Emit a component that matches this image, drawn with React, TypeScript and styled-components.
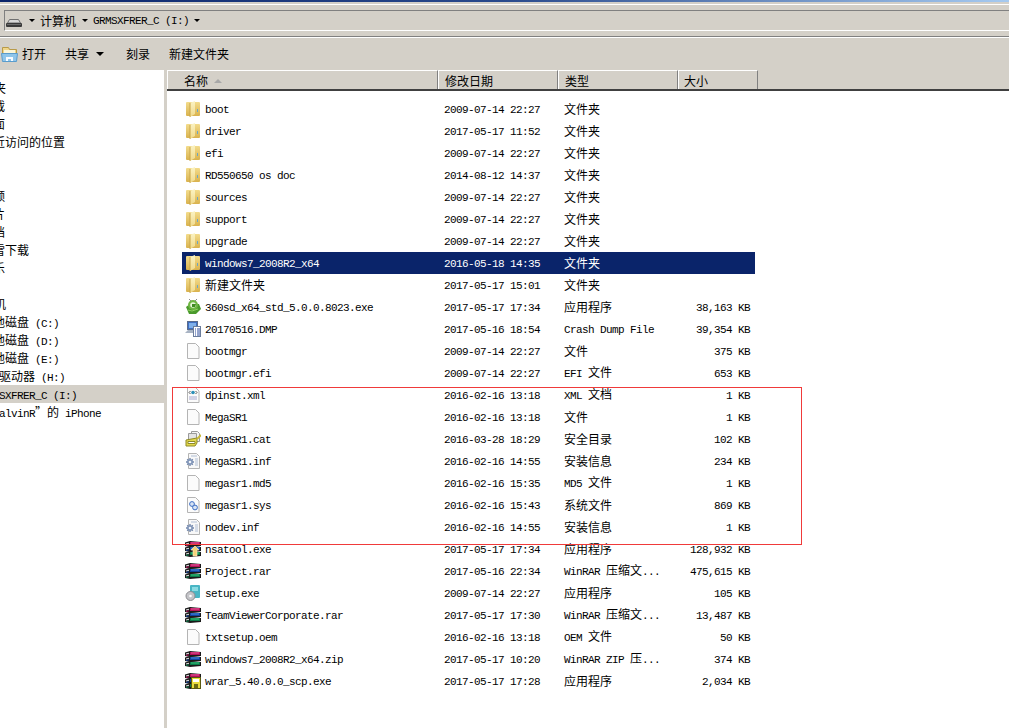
import styled, { createGlobalStyle } from "styled-components";

const GlobalStyle = createGlobalStyle`
  html, body {
    margin: 0;
    padding: 0;
    overflow: hidden;
    background: #ffffff;
    color: #000000;
    font-family: "Noto Sans CJK SC", "Liberation Sans", sans-serif;
    font-size: 12px;
  }
`;

const Page = styled.div`
  width: 1009px;
  height: 728px;
  display: flex;
  flex-direction: column;
  overflow: hidden;
  white-space: pre;
  line-height: 16px;
`;

const Latin = styled.span`
  font-family: "Liberation Mono", monospace;
  font-size: 11px;
  letter-spacing: -0.6px;
`;

// the source is SimSun: half-width latin next to full-width hanzi
function Label({ text }: { text: string }) {
  const runs = text.match(/[\x00-\x7f]+|[^\x00-\x7f]+/g) ?? [];
  return (
    <>
      {runs.map((run, i) =>
        /^[\x00-\x7f]/.test(run) ? <Latin key={i}>{run}</Latin> : <span key={i}>{run}</span>
      )}
    </>
  );
}

const TitleStrip = styled.div`
  height: 2px;
  background: linear-gradient(to right, #0a246a 0%, #2a4a8c 50%, #a6caf0 100%);
`;

const Chrome = styled.div`
  background: #d4d0c8;
  height: 35px;
  border-bottom: 1px solid #808080;
  box-sizing: border-box;
  padding: 2px 0 0 0;
`;

const ChromeInner = styled.div`
  border-top: 1px solid #ffffff;
  padding: 5px 0 0 4px;
`;

const AddressBox = styled.div`
  height: 21px;
  display: flex;
  align-items: center;
  border-top: 1px solid #808080;
  border-left: 1px solid #808080;
  border-bottom: 1px solid #ffffff;
  box-sizing: border-box;
  padding-left: 1px;
`;

const Crumb = styled.span<{ $gap: number }>`
  margin-left: ${({ $gap }) => $gap}px;
  display: inline-flex;
  align-items: center;
`;

const Caret = styled.span<{ $left: number; $size?: number }>`
  width: 0;
  height: 0;
  margin-left: ${({ $left }) => $left}px;
  border-left: ${({ $size }) => $size ?? 3}px solid transparent;
  border-right: ${({ $size }) => $size ?? 3}px solid transparent;
  border-top: ${({ $size }) => $size ?? 3}px solid #000000;
`;

const Toolbar = styled.div`
  height: 33px;
  background: #d4d0c8;
  border-top: 1px solid #ffffff;
  box-sizing: border-box;
  display: flex;
  align-items: center;
  padding-left: 1px;
`;

const ToolButton = styled.span<{ $left: number }>`
  margin-left: ${({ $left }) => $left}px;
  display: inline-flex;
  align-items: center;
`;

const Main = styled.div`
  flex: 1;
  display: flex;
  min-height: 0;
`;

const Nav = styled.div`
  width: 164px;
  padding-top: 9px;
  overflow: hidden;
  box-sizing: border-box;
  flex: none;
`;

const NavRow = styled.div<{ $depth: number; $active?: boolean }>`
  height: 18px;
  line-height: 18px;
  padding-left: ${({ $depth }) => ($depth === 1 ? 11 : 0)}px;
  background: ${({ $active }) => ($active ? "#d4d0c8" : "transparent")};
  overflow: hidden;
`;

// the tree is scrolled sideways, so its labels start left of the window edge
const NavText = styled.div`
  margin-left: -30px;
`;

const Splitter = styled.div`
  width: 3px;
  background: #d4d0c8;
  flex: none;
`;

const Content = styled.div`
  flex: 1;
  position: relative;
  min-width: 0;
`;

const Header = styled.div`
  height: 21px;
  display: grid;
  grid-template-columns: 271px 120px 120px 80px 1fr;
  background: #d4d0c8;
  border-bottom: 2px solid #404040;
  box-sizing: border-box;
`;

const HeaderCell = styled.div<{ $pad: number }>`
  display: flex;
  align-items: center;
  gap: 6px;
  padding: 1px 0 0 ${({ $pad }) => $pad}px;
  border-top: 1px solid #ffffff;
  border-left: 1px solid #ffffff;
  border-right: 1px solid #808080;
  box-sizing: border-box;
  min-width: 0;
`;

const SortMark = styled.span`
  width: 0;
  height: 0;
  border-left: 4px solid transparent;
  border-right: 4px solid transparent;
  border-bottom: 4px solid #a8a8a8;
`;

const List = styled.div`
  padding: 7px 0 0 15px;
`;

const Row = styled.div<{ $selected?: boolean }>`
  width: 573px;
  height: 22px;
  display: grid;
  grid-template-columns: 262px 120px 120px 71px;
  align-items: center;
  background: ${({ $selected }) => ($selected ? "#0a246a" : "transparent")};
  color: ${({ $selected }) => ($selected ? "#ffffff" : "#000000")};
`;

const NameCell = styled.div`
  display: flex;
  align-items: center;
  padding-left: 3px;
  gap: 4px;
`;

const SizeCell = styled.div`
  text-align: right;
  padding-right: 5px;
`;

const Callout = styled.div`
  position: absolute;
  left: 5px;
  top: 317px;
  width: 630px;
  height: 158px;
  border: 1px solid #f03a3a;
  box-sizing: border-box;
  pointer-events: none;
`;

type IconKind =
  | "folder"
  | "exe360"
  | "dmp"
  | "file"
  | "xml"
  | "cat"
  | "inf"
  | "sys"
  | "nsa"
  | "rar"
  | "setup"
  | "wrar";

const Sheet = () => (
  <path d="M2.5 .5h8l3.5 3.5v11.5h-11.5z" fill="#fbfbfb" stroke="#b4b4b4" />
);

const Book = ({ y, dark, light }: { y: number; dark: string; light: string }) => (
  <g transform={`translate(0 ${y})`}>
    <path d="M0 1.5l5-1.5 11 1v4l-11 1-5-1z" fill="#1a1a1a" />
    <path d="M5 1h10v3h-10z" fill={dark} />
    <path d="M6 1.5h8v1h-8z" fill={light} />
    <path d="M1 2.5l3-.7v1l-3 .7z" fill="#e8e8e8" />
    <path d="M1 4l3-.7v1l-3 .7z" fill={dark} />
  </g>
);

const Books = () => (
  <>
    <Book y={0} dark="#b01058" light="#e85a9c" />
    <Book y={5} dark="#10409c" light="#4a94e8" />
    <Book y={10} dark="#0a7a48" light="#38c880" />
  </>
);

const InfGear = () => (
  <>
    <path d="M3.5 .5h8l3 3v12h-11z" fill="#f8f8f8" stroke="#b4b4b4" />
    <path d="M6 3h6M10 6h3M10 8h3M10 10h3M10 12h3" stroke="#b0bed4" />
    <g stroke="#7488ac" strokeWidth="1.4">
      <path d="M5 5v8M1 9h8M2.2 6.2l5.6 5.6M7.8 6.2l-5.6 5.6" />
    </g>
    <circle cx="5" cy="9" r="2.8" fill="#7f94b8" />
    <circle cx="5" cy="9" r="1.3" fill="#f0f4fa" />
  </>
);

function FileIcon({ kind }: { kind: IconKind }) {
  return (
    <svg width="16" height="16" viewBox="0 0 16 16" style={{ flex: "none" }}>
      {kind === "folder" && (
        <>
          <defs>
            <linearGradient id="folderBody" x1="0" y1="0" x2="0" y2="1">
              <stop offset="0" stopColor="#f3dc8c" />
              <stop offset="1" stopColor="#d9b24e" />
            </linearGradient>
            <linearGradient id="folderPage" x1="0" y1="0" x2="0" y2="1">
              <stop offset="0" stopColor="#fbf3c4" />
              <stop offset="1" stopColor="#f0d98a" />
            </linearGradient>
          </defs>
          <rect x="1" y="1" width="14" height="14" rx="1" fill="url(#folderBody)" />
          <path d="M5 2l5-2v13l-5 3z" fill="url(#folderPage)" />
          <path d="M5 2v14" stroke="#c8a446" />
          <rect x="12" y="8" width="1" height="3" fill="#6aa7c8" />
        </>
      )}
      {kind === "exe360" && (
        <>
          <path d="M1 8l4-3 9 0 2 5-5 5-7 0z" fill="#4a9a2c" />
          <circle cx="8" cy="6" r="5" fill="#6fb644" />
          <circle cx="8" cy="6" r="2.8" fill="#e6f4d8" />
          <path d="M4 0l2 2M12 0l-2 2" stroke="#8a8a8a" />
          <path d="M7 5h4l-1 3h-3z" fill="#3f8a24" />
          <path d="M3 11l4 1 6-2" stroke="#8fd060" fill="none" />
        </>
      )}
      {kind === "dmp" && (
        <>
          <rect x="2.5" y=".5" width="10" height="8" fill="#3f6fc4" stroke="#5a6c8c" />
          <rect x="4" y="2" width="7" height="5" fill="#7fb0ea" />
          <path d="M0 12l3-3h6v3z" fill="#a9b4c4" />
          <rect x="8.5" y="5.5" width="7" height="10" fill="#ffffff" stroke="#6b7d9c" />
          <path d="M10 8h1M12 8h3M10 10h1M12 10h3M10 12h1M12 12h3M10 14h1M12 14h3" stroke="#2a4a9c" />
        </>
      )}
      {kind === "file" && <Sheet />}
      {kind === "xml" && (
        <>
          <Sheet />
          <path d="M5.5 4l-1.5 1.5 1.5 1.5M10.500 4l1.500 1.500-1.500 1.500" stroke="#555" fill="none" />
          <circle cx="8" cy="5.5" r="1.800" fill="#2a8fb8" />
          <path d="M4 10h8M4 12h8" stroke="#a8a8d0" />
        </>
      )}
      {kind === "cat" && (
        <>
          <path d="M6.500 .5h6l2 2v8h-8z" fill="#f4f4f4" stroke="#9a9a9a" />
          <path d="M3.500 2.500h8v8h-8z" fill="#e4e4e4" stroke="#9a9a9a" />
          <path d="M1 9l11-2v5l-2 3h-9z" fill="#e3d84a" stroke="#8e8a2a" />
          <path d="M3 10.500h7v2h-7z" fill="#ffffff" stroke="#8e8a2a" />
          <path d="M12 8l4-4" stroke="#c8b93a" strokeWidth="2" />
        </>
      )}
      {kind === "inf" && <InfGear />}
      {kind === "sys" && (
        <>
          <Sheet />
          <circle cx="7" cy="7" r="2.400" fill="#d8e4f4" stroke="#3f6fc4" />
          <circle cx="10" cy="10.500" r="2.400" fill="#d8e4f4" stroke="#3f6fc4" />
        </>
      )}
      {kind === "rar" && <Books />}
      {kind === "nsa" && (
        <>
          <Books />
          <path d="M10 5l4 4h-2v6h-4v-6h-2z" fill="#f4d27a" stroke="#fff3c8" strokeWidth=".6" />
        </>
      )}
      {kind === "wrar" && (
        <>
          <Books />
          <rect x="6.500" y="4.500" width="9" height="11" fill="#e8dc3c" stroke="#5a5a10" />
          <rect x="8" y="6" width="6" height="3" fill="#ffffff" />
          <rect x="9" y="11" width="4" height="4" fill="#6a6a14" />
        </>
      )}
      {kind === "setup" && (
        <>
          <rect x="5" y="0" width="10" height="13" rx="1" fill="#49b6c4" />
          <rect x="7" y="2" width="6" height="4" fill="#8adbe2" />
          <circle cx="5.500" cy="11" r="4.500" fill="#c4c4c8" stroke="#8c8c90" />
          <circle cx="5.500" cy="11" r="1.300" fill="#ffffff" />
        </>
      )}
    </svg>
  );
}

const DriveIcon = () => (
  <svg width="16" height="16" viewBox="0 0 16 16" style={{ flex: "none", marginTop: 3 }}>
    <path d="M3.500 5.500h9l2 3.500h-13z" fill="#d8d8d8" stroke="#707070" />
    <rect x="0" y="9" width="16" height="4" rx="1" fill="#3a3a3a" />
    <rect x="1" y="10" width="14" height="1" fill="#6a6a6a" />
  </svg>
);

const OpenIcon = () => (
  <svg width="17" height="16" viewBox="0 0 17 16" style={{ flex: "none" }}>
    <path d="M1.500 1.500h6l1 2h7v10h-14z" fill="#f0d68a" stroke="#b89a48" />
    <path d="M3 4h11v3h-11z" fill="#fbf6da" />
    <path d="M.5 7.500h16l-1 8h-14z" fill="#8fc5ea" stroke="#5a9ccc" />
    <path d="M5 11h7v4h-2v-2h-3v2h-2z" fill="#f8fbff" />
  </svg>
);

const navItems: { text: string; depth: number; active?: boolean }[] = [
  { text: "收藏夹", depth: 0 },
  { text: "下载", depth: 1 },
  { text: "桌面", depth: 1 },
  { text: "最近访问的位置", depth: 1 },
  { text: " ", depth: 0 },
  { text: "库", depth: 0 },
  { text: "视频", depth: 1 },
  { text: "图片", depth: 1 },
  { text: "文档", depth: 1 },
  { text: "迅雷下载", depth: 1 },
  { text: "音乐", depth: 1 },
  { text: " ", depth: 0 },
  { text: "计算机", depth: 0 },
  { text: "本地磁盘 (C:)", depth: 1 },
  { text: "本地磁盘 (D:)", depth: 1 },
  { text: "本地磁盘 (E:)", depth: 1 },
  { text: "CD 驱动器 (H:)", depth: 1 },
  { text: "GRMSXFRER_C (I:)", depth: 1, active: true },
  { text: "“CalvinR”的 iPhone", depth: 1 },
];

const files: { name: string; date: string; type: string; size?: string; icon: IconKind; selected?: boolean }[] = [
  { name: "boot", date: "2009-07-14 22:27", type: "文件夹", icon: "folder" },
  { name: "driver", date: "2017-05-17 11:52", type: "文件夹", icon: "folder" },
  { name: "efi", date: "2009-07-14 22:27", type: "文件夹", icon: "folder" },
  { name: "RD550650 os doc", date: "2014-08-12 14:37", type: "文件夹", icon: "folder" },
  { name: "sources", date: "2009-07-14 22:27", type: "文件夹", icon: "folder" },
  { name: "support", date: "2009-07-14 22:27", type: "文件夹", icon: "folder" },
  { name: "upgrade", date: "2009-07-14 22:27", type: "文件夹", icon: "folder" },
  { name: "windows7_2008R2_x64", date: "2016-05-18 14:35", type: "文件夹", icon: "folder", selected: true },
  { name: "新建文件夹", date: "2017-05-17 15:01", type: "文件夹", icon: "folder" },
  { name: "360sd_x64_std_5.0.0.8023.exe", date: "2017-05-17 17:34", type: "应用程序", size: "38,163 KB", icon: "exe360" },
  { name: "20170516.DMP", date: "2017-05-16 18:54", type: "Crash Dump File", size: "39,354 KB", icon: "dmp" },
  { name: "bootmgr", date: "2009-07-14 22:27", type: "文件", size: "375 KB", icon: "file" },
  { name: "bootmgr.efi", date: "2009-07-14 22:27", type: "EFI 文件", size: "653 KB", icon: "file" },
  { name: "dpinst.xml", date: "2016-02-16 13:18", type: "XML 文档", size: "1 KB", icon: "xml" },
  { name: "MegaSR1", date: "2016-02-16 13:18", type: "文件", size: "1 KB", icon: "file" },
  { name: "MegaSR1.cat", date: "2016-03-28 18:29", type: "安全目录", size: "102 KB", icon: "cat" },
  { name: "MegaSR1.inf", date: "2016-02-16 14:55", type: "安装信息", size: "234 KB", icon: "inf" },
  { name: "megasr1.md5", date: "2016-02-16 15:35", type: "MD5 文件", size: "1 KB", icon: "file" },
  { name: "megasr1.sys", date: "2016-02-16 15:43", type: "系统文件", size: "869 KB", icon: "sys" },
  { name: "nodev.inf", date: "2016-02-16 14:55", type: "安装信息", size: "1 KB", icon: "inf" },
  { name: "nsatool.exe", date: "2017-05-17 17:34", type: "应用程序", size: "128,932 KB", icon: "nsa" },
  { name: "Project.rar", date: "2017-05-16 22:34", type: "WinRAR 压缩文...", size: "475,615 KB", icon: "rar" },
  { name: "setup.exe", date: "2009-07-14 22:27", type: "应用程序", size: "105 KB", icon: "setup" },
  { name: "TeamViewerCorporate.rar", date: "2017-05-17 17:30", type: "WinRAR 压缩文...", size: "13,487 KB", icon: "rar" },
  { name: "txtsetup.oem", date: "2016-02-16 13:18", type: "OEM 文件", size: "50 KB", icon: "file" },
  { name: "windows7_2008R2_x64.zip", date: "2017-05-17 10:20", type: "WinRAR ZIP 压...", size: "374 KB", icon: "rar" },
  { name: "wrar_5.40.0.0_scp.exe", date: "2017-05-17 17:28", type: "应用程序", size: "2,034 KB", icon: "wrar" },
];

export default function App() {
  return (
    <Page lang="zh-CN">
      <GlobalStyle />
      <TitleStrip />
      <Chrome>
        <ChromeInner>
          <AddressBox>
            <DriveIcon />
            <Caret $left={7} />
            <Crumb $gap={5}>
              <Label text="计算机" />
            </Crumb>
            <Caret $left={6} />
            <Crumb $gap={5}>
              <Label text="GRMSXFRER_C (I:)" />
            </Crumb>
            <Caret $left={5} />
          </AddressBox>
        </ChromeInner>
      </Chrome>
      <Toolbar>
        <OpenIcon />
        <ToolButton $left={4}>打开</ToolButton>
        <ToolButton $left={19}>共享</ToolButton>
        <Caret $left={7} $size={4} />
        <ToolButton $left={22}>刻录</ToolButton>
        <ToolButton $left={19}>新建文件夹</ToolButton>
      </Toolbar>
      <Main>
        <Nav>
          {navItems.map((item, i) => (
            <NavRow key={i} $depth={item.depth} $active={item.active}>
              <NavText>
                <Label text={item.text} />
              </NavText>
            </NavRow>
          ))}
        </Nav>
        <Splitter />
        <Content>
          <Header>
            <HeaderCell $pad={16}>
              名称
              <SortMark />
            </HeaderCell>
            <HeaderCell $pad={6}>修改日期</HeaderCell>
            <HeaderCell $pad={6}>类型</HeaderCell>
            <HeaderCell $pad={5}>大小</HeaderCell>
            <div />
          </Header>
          <List>
            {files.map((file) => (
              <Row key={file.name} $selected={file.selected}>
                <NameCell>
                  <FileIcon kind={file.icon} />
                  <span>
                    <Label text={file.name} />
                  </span>
                </NameCell>
                <div>
                  <Label text={file.date} />
                </div>
                <div>
                  <Label text={file.type} />
                </div>
                <SizeCell>{file.size && <Label text={file.size} />}</SizeCell>
              </Row>
            ))}
          </List>
          <Callout />
        </Content>
      </Main>
    </Page>
  );
}
